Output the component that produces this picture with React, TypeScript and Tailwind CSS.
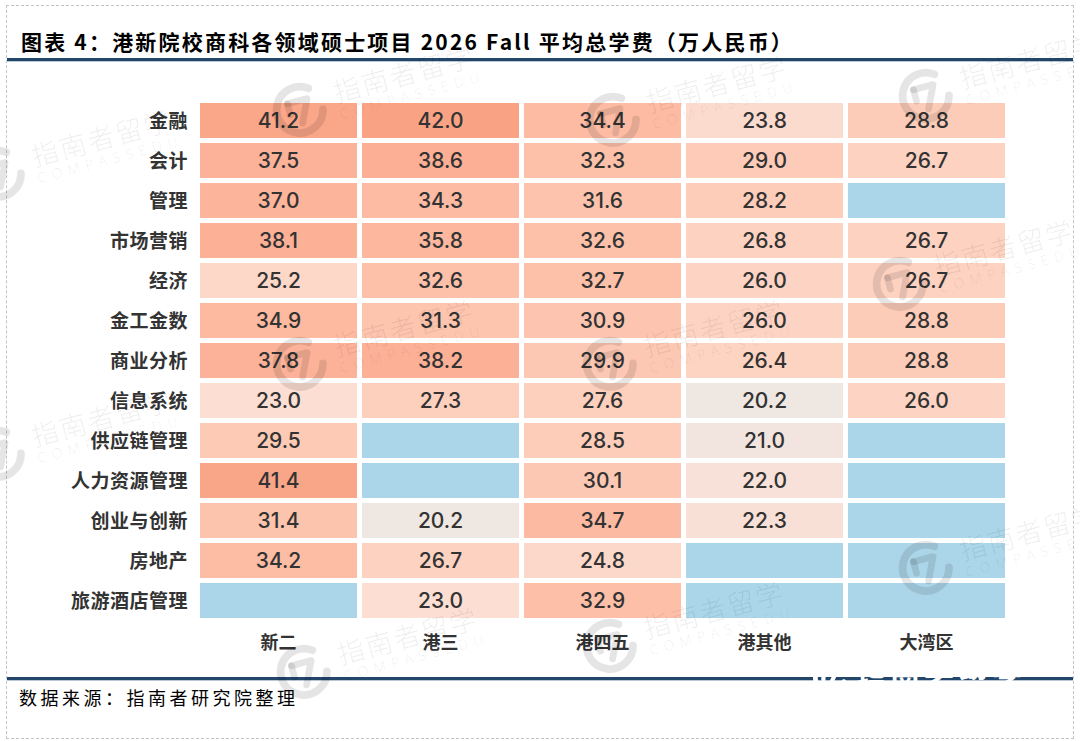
import React from "react";

type Row = { label: string; v: (number | null)[] };

const rows: Row[] = [
  { label: "金融", v: [41.2, 42.0, 34.4, 23.8, 28.8] },
  { label: "会计", v: [37.5, 38.6, 32.3, 29.0, 26.7] },
  { label: "管理", v: [37.0, 34.3, 31.6, 28.2, null] },
  { label: "市场营销", v: [38.1, 35.8, 32.6, 26.8, 26.7] },
  { label: "经济", v: [25.2, 32.6, 32.7, 26.0, 26.7] },
  { label: "金工金数", v: [34.9, 31.3, 30.9, 26.0, 28.8] },
  { label: "商业分析", v: [37.8, 38.2, 29.9, 26.4, 28.8] },
  { label: "信息系统", v: [23.0, 27.3, 27.6, 20.2, 26.0] },
  { label: "供应链管理", v: [29.5, null, 28.5, 21.0, null] },
  { label: "人力资源管理", v: [41.4, null, 30.1, 22.0, null] },
  { label: "创业与创新", v: [31.4, 20.2, 34.7, 22.3, null] },
  { label: "房地产", v: [34.2, 26.7, 24.8, null, null] },
  { label: "旅游酒店管理", v: [null, 23.0, 32.9, null, null] },
];

const cols = ["新二", "港三", "港四五", "港其他", "大湾区"];

const stops: [number, number[]][] = [
  [20.2, [238, 231, 226]],
  [23, [252, 222, 211]],
  [27, [253, 209, 191]],
  [32, [253, 194, 171]],
  [38, [252, 177, 151]],
  [42, [249, 163, 132]],
];

function colorFor(v: number): string {
  if (v <= stops[0][0]) return `rgb(${stops[0][1].join(",")})`;
  for (let i = 0; i < stops.length - 1; i++) {
    const [a, ca] = stops[i];
    const [b, cb] = stops[i + 1];
    if (v <= b) {
      const t = (v - a) / (b - a);
      const c = ca.map((x, k) => Math.round(x + (cb[k] - x) * t));
      return `rgb(${c.join(",")})`;
    }
  }
  return `rgb(${stops[stops.length - 1][1].join(",")})`;
}

function Logo({ className }: { className: string }) {
  return (
    <svg viewBox="0 0 60 60" className={className} fill="none" stroke="currentColor" strokeLinecap="round">
      <path d="M44 11 A24 24 0 1 0 53 36" strokeWidth="8" />
      <path d="M19 21 H40 L29 44" strokeWidth="7" strokeLinejoin="round" />
      <path d="M19 21 V33" strokeWidth="7" />
    </svg>
  );
}

function Watermark({ x, y }: { x: number; y: number }) {
  return (
    <div
      className="absolute flex items-center gap-[8px] origin-left -rotate-[15deg] pointer-events-none select-none"
      style={{ left: x, top: y }}
    >
      <Logo className="w-[58px] h-[58px] text-black/[0.10]" />
      <div className="flex flex-col leading-none">
        <span className="text-[27px] font-light tracking-[2px] text-black/[0.08] [font-family:'Noto_Sans_CJK_SC',sans-serif]">
          指南者留学
        </span>
        <span className="mt-[3px] text-[14px] font-light tracking-[6px] text-black/[0.08] [font-family:'Noto_Sans',sans-serif]">
          COMPASSEDU
        </span>
      </div>
    </div>
  );
}

const marks: [number, number][] = [
  [272, 88],
  [-30, 152],
  [585, 98],
  [898, 74],
  [872, 262],
  [272, 342],
  [582, 342],
  [-30, 432],
  [898, 546],
  [276, 650],
  [582, 624],
];

export default function App() {
  return (
    <div className="relative w-[1080px] h-[741px] bg-white overflow-hidden text-[#333] [font-family:'Noto_Sans_CJK_SC',sans-serif]">
      <div className="ml-[6px] mt-[5px] w-[1068px] h-[734px] border border-dashed border-[#c4c4c4] flex flex-col">
        <div className="pl-[14px] mt-[21px] h-[28px] flex items-center text-[21px] font-bold text-black tracking-[2.2px] leading-none whitespace-nowrap">
          图表 4：港新院校商科各领域硕士项目 2026 Fall 平均总学费（万人民币）
        </div>
        <div className="mt-[3px] h-[3px] bg-[#23466b]" />
        <div className="h-[1px] bg-[#b9c6d3]" />

        <div className="mt-[41px] grid grid-cols-[188px_repeat(5,157px)] gap-x-[5px] gap-y-[5px]">
          {rows.map((r) => (
            <React.Fragment key={r.label}>
              <div className="h-[35px] pr-[7px] flex items-center justify-end text-[19px] font-bold tracking-[0.5px] whitespace-nowrap">
                {r.label}
              </div>
              {r.v.map((v, i) =>
                v === null ? (
                  <div key={i} className="h-[35px] bg-[#abd5e8]" />
                ) : (
                  <div
                    key={i}
                    className="h-[35px] flex items-center justify-center text-[21px] font-medium [font-family:Inter,sans-serif]"
                    style={{ backgroundColor: colorFor(v) }}
                  >
                    {v.toFixed(1)}
                  </div>
                )
              )}
            </React.Fragment>
          ))}
        </div>

        <div className="mt-[11px] grid grid-cols-[188px_repeat(5,157px)] gap-x-[5px]">
          <div />
          {cols.map((c) => (
            <div key={c} className="h-[24px] flex items-center justify-center text-[18px] font-bold">
              {c}
            </div>
          ))}
        </div>

        <div className="mt-[24px] h-[3px] bg-[#23466b]" />
        <div className="h-[1px] bg-[#b9c6d3]" />
        <div className="mt-[4px] pl-[12px] h-[24px] flex items-center text-[18px] tracking-[3.5px] text-black whitespace-nowrap">
          数据来源：指南者研究院整理
        </div>
      </div>

      {marks.map(([x, y], i) => (
        <Watermark key={i} x={x} y={y} />
      ))}

      <div className="absolute left-[812px] top-[660px] flex items-center gap-[8px] pointer-events-none">
        <Logo className="w-[36px] h-[36px] text-white" />
        <span className="text-[30px] font-bold text-white tracking-[4px] leading-none">指南者留学</span>
      </div>
    </div>
  );
}
